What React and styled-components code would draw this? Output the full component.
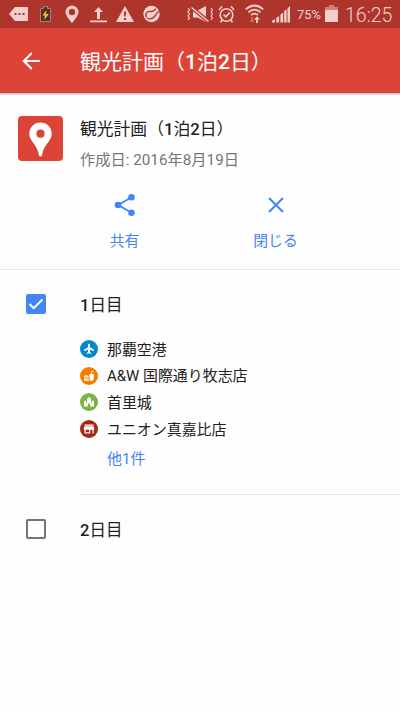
import { useState } from "react";
import styled, { createGlobalStyle } from "styled-components";

const GlobalStyle = createGlobalStyle`
  * {
    box-sizing: border-box;
  }

  body {
    margin: 0;
    background: #fff;
    color: #212121;
    font-family: Roboto, "Noto Sans CJK JP", sans-serif;
  }

  button {
    padding: 0;
    border: 0;
    background: none;
    font: inherit;
  }
`;

const Screen = styled.div`
  width: 400px;
  height: 711px;
  overflow: hidden;
  background: #fefefe;
`;

const StatusBar = styled.div`
  display: flex;
  align-items: center;
  height: 28px;
  padding-left: 9px;
  background: #ae352b;
  color: #f3cfcc;
`;

const StatusIcon = styled.svg`
  display: block;
  flex: none;
  width: ${(props) => props.$width}px;
  height: 20px;
  margin-right: ${(props) => props.$gap}px;
  fill: currentColor;
`;

const Percent = styled.span`
  width: 28px;
  padding-top: 2px;
  font-size: 12.8px;
  line-height: 20px;
`;

const Clock = styled.span`
  padding-top: 4px;
  font-size: 19.5px;
  font-weight: 300;
  line-height: 24px;
  white-space: nowrap;
`;

const AppBar = styled.header`
  position: relative;
  display: flex;
  align-items: center;
  height: 65px;
  padding-left: 19px;
  background: #db4437;
  color: #fff;
  box-shadow: 0 1px 2px rgba(0, 0, 0, 0.35);
`;

const BackButton = styled.button`
  width: 61px;
  height: 24px;
  color: inherit;

  svg {
    display: block;
  }
`;

const Heading = styled.h1`
  margin: 2px 0 0;
  font-size: 21px;
  font-weight: 400;
  line-height: 30px;
  white-space: nowrap;

  b {
    font-weight: 500;
  }
`;

const Summary = styled.section`
  display: flex;
  height: 87px;
  padding: 23px 0 0 18px;
`;

const MapIcon = styled.svg`
  display: block;
  width: 45px;
  height: 45px;
  margin-right: 17px;
`;

const MapTitle = styled.h2`
  margin: -1px 0 0;
  font-size: 16.8px;
  font-weight: 400;
  line-height: 28px;
  white-space: nowrap;

  b {
    font-weight: 500;
  }
`;

const Created = styled.p`
  margin: 3px 0 0;
  color: #757575;
  font-size: 15.25px;
  line-height: 28px;
  white-space: nowrap;
`;

const Actions = styled.div`
  display: flex;
  height: 90px;
  padding: 13px 49px 0 49px;
  border-bottom: 1px solid #e7e7e7;
`;

const Action = styled.button`
  display: flex;
  flex: 1;
  flex-direction: column;
  align-items: center;
  color: #4285f4;
  font-size: 14.8px;
  line-height: 24px;

  svg {
    margin-bottom: 12px;
  }
`;

const Day = styled.section`
  display: flex;
  padding-left: 26px;
`;

const CheckBox = styled.button`
  flex: none;
  width: 20px;
  height: 20px;
  margin: 24px 34px 0 0;
  border: 2px solid ${(props) => (props.$checked ? "#4285f4" : "#757575")};
  border-radius: 2px;
  background: ${(props) => (props.$checked ? "#4285f4" : "transparent")};

  svg {
    display: block;
    width: 16px;
    height: 16px;
  }
`;

const DayBody = styled.div`
  flex: 1;
  padding-top: 23px;
  border-bottom: ${(props) => (props.$last ? "0" : "1px solid #e7e7e7")};
`;

const DayTitle = styled.h3`
  margin: 0;
  font-size: 16.5px;
  font-weight: 400;
  line-height: 26px;
  white-space: nowrap;

  b {
    font-weight: 500;
  }
`;

const Places = styled.ul`
  margin: 17px 0 0;
  padding: 0;
  list-style: none;
`;

const Place = styled.li`
  display: flex;
  align-items: center;
  height: 26.6px;
  font-size: 14.95px;
  line-height: 26px;
  white-space: nowrap;
`;

const PlaceName = styled.span`
  padding-top: 1px;
`;

const Badge = styled.svg`
  display: block;
  width: 18px;
  height: 18px;
  margin-right: 9px;
  border-radius: 50%;
  background: ${(props) => props.$color};
  fill: #fff;
`;

const More = styled.button`
  display: block;
  margin: 4px 0 22px 27px;
  color: #4285f4;
  font-size: 15px;
  line-height: 26px;
`;

const places = [
  {
    name: "那覇空港",
    color: "#0288d1",
    icon: (
      <path d="M14 10.900V9.800L10 7.200V4.700c0-.6-.4-1-1-1s-1 .4-1 1v2.500L4 9.800v1.100l4-1.200v2.400l-1.200.9v.9L9 13.300l2.200.6V13l-1.200-.9V9.700z" />
    ),
  },
  {
    name: "A&W 国際通り牧志店",
    color: "#f57c00",
    icon: (
      <path d="M9.200 7h1.600l.6-2.500 1.900-.7.3.7-1.400.5-.5 2H14l-.7 6.700H9.900zM4 9.100q2.300-1.500 4.600 0v.7H4zM4 10.600h4.700v.8H4zM4 12.200h4.900l.1 1.500H4z" />
    ),
  },
  {
    name: "首里城",
    color: "#7cb342",
    icon: (
      <path d="M4 13.500V8.500l1.200-1.300 1.200 1.300v5zM7 13.500V5.800L9 3.800l2 2v7.700h-.8V11q-1.200-1.600-2.400 0v2.500zM11.600 13.500v-5l1.200-1.300L14 8.500v5zM6 10h1.400v3.500H6zM10.600 10H12v3.500h-1.400z" />
    ),
  },
  {
    name: "ユニオン真嘉比店",
    color: "#a52714",
    icon: (
      <path
        fillRule="evenodd"
        d="M4.500 4.500h9v1.200h-9zM4.400 6.300h9.200l.7 2.500v1h-.7v3.700h-1.200V9.800h-2.100v3.700H4.500V9.800h-.8v-1zM5.700 9.800v2.400h3.400V9.800z"
      />
    ),
  },
];

function NotificationIcons() {
  return (
    <>
      <StatusIcon viewBox="0 0 19 20" $width={19} $gap={12}>
        <path d="M6 3h12q1 0 1 1v12q0 1-1 1H6L0 10z" />
        <path
          d="M5.500 9h2v2h-2zm4 0h2v2h-2zm4 0h2v2h-2z"
          fill="#ae352b"
        />
      </StatusIcon>
      <StatusIcon viewBox="0 0 11 20" $width={11} $gap={14}>
        <path
          d="M3.500 2.500h4v2H10q.5 0 .5.5v12.500H.5V5q0-.5.5-.5h2.500z"
          fill="#4b3030"
          stroke="#cc9c91"
          strokeWidth=".7"
        />
        <path d="M6.500 6 2.300 11.600h2.500L4.400 16l4.400-6H6z" fill="#f4bf2a" />
      </StatusIcon>
      <StatusIcon viewBox="0 0 14 20" $width={14} $gap={11}>
        <path
          fillRule="evenodd"
          d="M7 1.500A6.500 6.500 0 0 0 .5 8C.5 12 7 19 7 19s6.500-7 6.500-11A6.500 6.500 0 0 0 7 1.500zm0 3.300a3.200 3.200 0 1 1 0 6.400 3.200 3.200 0 0 1 0-6.400z"
        />
      </StatusIcon>
      <StatusIcon viewBox="0 0 17 20" $width={17} $gap={9}>
        <path d="M8.500 3 4 8h3v7h3V8h3zM0 16.500h17v1.800H0z" />
      </StatusIcon>
      <StatusIcon viewBox="0 0 18 20" $width={18} $gap={9}>
        <path
          fillRule="evenodd"
          d="M9 2 0 18h18zM7.900 7.500h2.200l-.3 5H8.200zM8 14h2v2H8z"
        />
      </StatusIcon>
      <StatusIcon viewBox="0 0 17 20" $width={17} $gap={27}>
        <circle cx="8.500" cy="10" r="8.200" />
        <path
          d="M3.800 13.500C1.500 10 4 6.500 8 7.500q3 .2 4.800-3M4 14.500q5 1.500 8-2.500 2-3.500 4.300-5"
          fill="none"
          stroke="#ae352b"
          strokeWidth="1.300"
        />
      </StatusIcon>
    </>
  );
}

function SystemIcons() {
  return (
    <>
      <StatusIcon viewBox="0 0 26 20" $width={26} $gap={5}>
        <path d="M6 6.500h4.500L19 2v16l-8.500-4.500H6z" />
        <path d="m4.500 3.500 17 14" stroke="#ae352b" strokeWidth="3.800" />
        <path
          d="m4.500 3.500 17 14"
          stroke="currentColor"
          strokeWidth="1.600"
        />
        <path
          d="M1 4l1.500 2L1 8l1.500 2L1 12l1.500 2L1 16M24 4l1.500 2L24 8l1.500 2-1.500 2 1.500 2-1.500 2"
          fill="none"
          stroke="currentColor"
          strokeWidth="1.200"
        />
      </StatusIcon>
      <StatusIcon viewBox="0 0 17 20" $width={17} $gap={10}>
        <path
          d="M14.800 11a6.300 6.300 0 1 1-12.600 0 6.300 6.300 0 0 1 12.600 0zM1 6l3-3.700M16 6l-3-3.700M5.500 10.500l2.300 2.300 4-4.200M4 16l-1.400 2.400M13 16l1.400 2.400"
          fill="none"
          stroke="currentColor"
          strokeWidth="1.600"
        />
      </StatusIcon>
      <StatusIcon viewBox="0 0 19 20" $width={19} $gap={8}>
        <path
          d="M.8 5.400q8.700-7.800 17.400 0M3.400 8.400q6.100-5.600 12.200 0M6.100 11.200q3.400-3 6.800 0"
          fill="none"
          stroke="currentColor"
          strokeWidth="1.700"
        />
        <path d="m11.900 12.300-3 3.200H11V19h1.800v-3.500h2.100z" />
        <path d="M6.200 13H8v3.200h1.600L7.100 19l-2.600-2.800h1.700z" opacity=".4" />
      </StatusIcon>
      <StatusIcon viewBox="0 0 18 20" $width={18} $gap={7}>
        <path d="M0 18.500V17l3-2v3.500zM4.300 14l2.800-2v6.500H4.300zM8.400 10.500l2.800-2v10H8.400zM12.200 7l2.400-1.700v13.200h-2.400zM15.500 4.300 18 2v16.500h-2.500z" />
      </StatusIcon>
      <Percent>75%</Percent>
      <StatusIcon viewBox="0 0 13 20" $width={13} $gap={7}>
        <path d="M4 1h5v2h4v4H0V3h4z" opacity=".5" />
        <path d="M0 6h13v12H0z" />
      </StatusIcon>
    </>
  );
}

function CheckMark() {
  return (
    <svg viewBox="0 0 16 16" fill="none" stroke="#fff" strokeWidth="2">
      <path d="m1.500 8 4.200 4.200L14.500 3.500" />
    </svg>
  );
}

function App() {
  const [checked, setChecked] = useState([true, false]);

  const toggle = (day) =>
    setChecked(checked.map((value, i) => (i === day ? !value : value)));

  return (
    <>
      <GlobalStyle />
      <Screen>
        <StatusBar>
          <NotificationIcons />
          <SystemIcons />
          <Clock>16:25</Clock>
        </StatusBar>
        <AppBar>
          <BackButton>
            <svg width="24" height="24" viewBox="0 0 24 24" fill="none">
              <path
                d="M21 12H5M12.800 4 4.800 12l8 8"
                stroke="currentColor"
                strokeWidth="2"
              />
            </svg>
          </BackButton>
          <Heading>
            観光計画（<b>1</b>泊<b>2</b>日）
          </Heading>
        </AppBar>

        <Summary>
          <MapIcon viewBox="0 0 44 44">
            <rect width="44" height="44" rx="4" fill="#db4437" />
            <path
              fill="#fff"
              fillRule="evenodd"
              d="M22 6.300A11 11 0 0 0 11 17.300c0 7.400 8 10.400 9.400 20.500.3 2.400 2.900 2.400 3.200 0C25 27.700 33 24.700 33 17.300A11 11 0 0 0 22 6.300zm0 7a4 4 0 1 1 0 8 4 4 0 0 1 0-8z"
            />
          </MapIcon>
          <div>
            <MapTitle>
              観光計画（<b>1</b>泊<b>2</b>日）
            </MapTitle>
            <Created>作成日: 2016年8月19日</Created>
          </div>
        </Summary>

        <Actions>
          <Action>
            <svg width="24" height="24" viewBox="0 0 24 24" fill="currentColor">
              <path
                d="M18.500 4.200 5.200 12l13.300 7.800"
                fill="none"
                stroke="currentColor"
                strokeWidth="1.800"
              />
              <circle cx="18.500" cy="4.300" r="3.300" />
              <circle cx="5" cy="12" r="3.300" />
              <circle cx="18.500" cy="19.700" r="3.300" />
            </svg>
            共有
          </Action>
          <Action>
            <svg width="24" height="24" viewBox="0 0 24 24" fill="none">
              <path
                d="m5 5 14 14M19 5 5 19"
                stroke="currentColor"
                strokeWidth="2"
              />
            </svg>
            閉じる
          </Action>
        </Actions>

        <Day>
          <CheckBox $checked={checked[0]} onClick={() => toggle(0)}>
            {checked[0] && <CheckMark />}
          </CheckBox>
          <DayBody>
            <DayTitle>
              <b>1</b>日目
            </DayTitle>
            <Places>
              {places.map((place) => (
                <Place key={place.name}>
                  <Badge viewBox="0 0 18 18" $color={place.color}>
                    {place.icon}
                  </Badge>
                  <PlaceName>{place.name}</PlaceName>
                </Place>
              ))}
            </Places>
            <More>他1件</More>
          </DayBody>
        </Day>
        <Day>
          <CheckBox $checked={checked[1]} onClick={() => toggle(1)}>
            {checked[1] && <CheckMark />}
          </CheckBox>
          <DayBody $last>
            <DayTitle>
              <b>2</b>日目
            </DayTitle>
          </DayBody>
        </Day>
      </Screen>
    </>
  );
}

export default App;
